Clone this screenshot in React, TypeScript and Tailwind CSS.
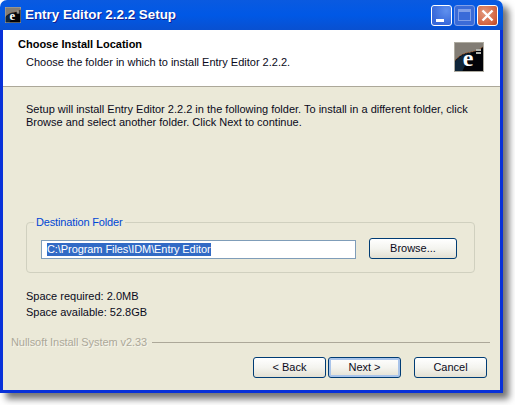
const ui = "[font-family:'Liberation_Sans',Arial,sans-serif]";

function CaptionButton({ kind }: { kind: "min" | "max" | "close" }) {
  if (kind === "close") {
    return (
      <div className="flex h-[21px] w-[21px] items-center justify-center rounded-[3px] border border-white bg-[radial-gradient(circle_at_35%_35%,#e39a7e,#d2623f_70%,#b8431f)]">
        <svg width="15" height="15" viewBox="0 0 15 15">
          <path d="M2.5 2.5l10 10M12.5 2.5l-10 10" stroke="#fff" strokeWidth="2.4" />
        </svg>
      </div>
    );
  }
  if (kind === "max") {
    return (
      <div className="flex h-[21px] w-[21px] items-center justify-center rounded-[3px] border border-[#7f9fe8] bg-[#3a6bd8]">
        <div className="h-[12px] w-[13px] border border-[#7f9fe8] border-t-[3px]" />
      </div>
    );
  }
  return (
    <div className="flex h-[21px] w-[21px] items-end rounded-[3px] border border-white bg-[radial-gradient(circle_at_75%_25%,#5f90ee,#3768da_70%)] pb-[3px] pl-[4px]">
      <div className="h-[3px] w-[8px] bg-white" />
    </div>
  );
}

function AppIcon({ size }: { size: number }) {
  return (
    <svg width={size} height={size} viewBox="0 0 30 30">
      <rect width="30" height="30" fill="#020308" />
      <path d="M0 0H30V4C25 8 21 9 17 10 10 11 5 13 0 20Z" fill="#827d75" />
      <path d="M0 20C5 13 10 11 17 10 21 9 25 8 30 4" fill="none" stroke="#a8683c" strokeWidth="1" strokeDasharray="2 1" />
      <path d="M0 21C5 14 10 12 17 11L8 30H0Z" fill="#10263a" />
      <rect x="0.5" y="0.5" width="29" height="29" fill="none" stroke="#aeaba0" />
      <text x="14" y="24" textAnchor="middle" fontFamily="Liberation Serif" fontWeight="700" fontSize="24" fill="#fff">
        e
      </text>
      <path d="M22 8h5M22 11h5" stroke="#b5b5ad" strokeWidth="2" />
    </svg>
  );
}

function XpButton({ label, active, w = "w-[73px]" }: { label: string; active?: boolean; w?: string }) {
  return (
    <button
      className={`block h-[21px] ${w} rounded-[3px] border border-[#003c74] bg-gradient-to-b from-white via-[#f4f4ef] to-[#e3e0d2] text-[11px] leading-none text-[#0a0a20] ${
        active ? "shadow-[inset_0_0_0_2px_#a9c4ea]" : ""
      }`}
    >
      {label}
    </button>
  );
}

export default function App() {
  return (
    <div className={`h-[405px] w-[515px] overflow-hidden bg-white ${ui}`}>
      <div className="flex h-[393px] w-[503px] flex-col rounded-t-[7px] shadow-[6px_6px_7px_rgba(0,0,0,0.55)]">
        {/* title bar */}
        <div className="flex h-[30px] shrink-0 items-center rounded-t-[7px] bg-gradient-to-b from-[#0a5ae0] via-[#0058e6] to-[#0850d0] pl-[5px] pr-[5px]">
          <div className="h-4 w-4">
            <AppIcon size={16} />
          </div>
          <span className="ml-[4px] text-[13.4px] font-bold text-white [text-shadow:1px_1px_#0f1f8f]">
            Entry Editor 2.2.2 Setup
          </span>
          <div className="ml-auto flex gap-[2px]">
            <CaptionButton kind="min" />
            <CaptionButton kind="max" />
            <CaptionButton kind="close" />
          </div>
        </div>

        {/* client area */}
        <div className="flex min-h-0 flex-1 flex-col border-x-[3px] border-b-[3px] border-[#0831d9] bg-[#ebe9d8]">
          <div className="flex h-[57px] shrink-0 items-start justify-between border-b border-[#aca899] bg-white pl-[15px] pr-[16px] pt-[7px]">
            <div>
              <div className="text-[11px] font-bold leading-[15px] text-black">Choose Install Location</div>
              <div className="ml-[8px] mt-[3px] text-[11px] leading-[15px] text-[#0a0a20]">
                Choose the folder in which to install Entry Editor 2.2.2.
              </div>
            </div>
            <div className="mt-[5px]">
              <AppIcon size={30} />
            </div>
          </div>

          <div className="flex min-h-0 flex-1 flex-col pl-[23px] pt-[16px]">
            <p className="whitespace-nowrap text-[11px] leading-[13px] text-[#0a0a20]">
              Setup will install Entry Editor 2.2.2 in the following folder. To install in a different folder, click
              <br />
              Browse and select another folder. Click Next to continue.
            </p>

            <fieldset className="mt-[87px] h-[57px] w-[449px] rounded-[4px] border border-[#d0d0bf] pl-[14px]">
              <legend className="ml-[-7px] px-[2px] text-[11px] leading-[13px] tracking-[-0.15px] text-[#0046d5]">
                Destination Folder
              </legend>
              <div className="mt-[11px] flex items-start">
                <div className="flex h-[19px] w-[315px] items-center border border-[#7f9db9] bg-white pl-[5px]">
                  <span className="bg-[#316ac5] text-[11px] leading-[13px] tracking-[-0.08px] text-white">
                    C:\Program Files\IDM\Entry Editor
                  </span>
                </div>
                <div className="ml-[13px] -mt-[2px]">
                  <XpButton label="Browse..." w="w-[88px]" />
                </div>
              </div>
            </fieldset>

            <div className="mt-[15px] text-[11px] leading-[16px] text-[#0a0a20]">
              <div>Space required: 2.0MB</div>
              <div>Space available: 52.8GB</div>
            </div>
          </div>

          <div className="flex items-center pr-[10px]">
            <span className="pl-[8px] text-[11px] leading-[13px] tracking-[-0.07px] text-[#aca899] [text-shadow:1px_1px_#f6f5ec]">
              Nullsoft Install System v2.33
            </span>
            <div className="ml-[5px] h-px flex-1 bg-[#aca899]" />
          </div>

          <div className="flex justify-end gap-[2px] pb-[12px] pr-[13px] pt-[8px]">
            <XpButton label="< Back" />
            <XpButton label="Next >" active />
            <div className="ml-[11px]">
              <XpButton label="Cancel" />
            </div>
          </div>
        </div>
      </div>
    </div>
  );
}
